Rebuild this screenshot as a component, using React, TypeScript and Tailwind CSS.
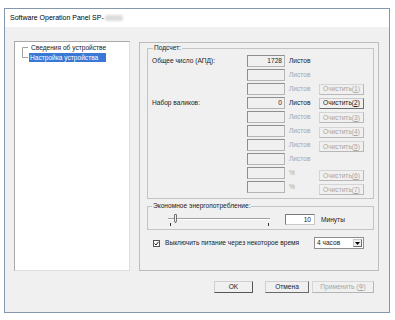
import React from "react";

const font = { fontFamily: '"Liberation Sans", Arial, sans-serif' };

type Row = { label?: string; value?: string; unit: string; active?: boolean };

const rows: Row[] = [
  { label: "Общее число (АПД):", value: "1728", unit: "Листов", active: true },
  { unit: "Листов" },
  { unit: "Листов" },
  { label: "Набор валиков:", value: "0", unit: "Листов", active: true },
  { unit: "Листов" },
  { unit: "Листов" },
  { unit: "Листов" },
  { unit: "Листов" },
  { unit: "%" },
  { unit: "%" },
];

const clearButtons: (number | null)[] = [1, 2, 3, 4, 5, null, 6, 7];

function Field({ value }: { value?: string }) {
  return (
    <div className="w-[38px] h-[12px] border border-[#b5b5b5] border-t-[#8e8e8e] border-l-[#8e8e8e] bg-[#f0f0f0] flex items-center justify-end pr-[2px] text-[#222]">
      {value}
    </div>
  );
}

function ClearButton({ n }: { n: number }) {
  const enabled = n === 2;
  return (
    <div
      className={
        enabled
          ? "w-[45px] h-[11px] border border-[#c8c8c8] border-b-[#6e6e6e] border-r-[#6e6e6e] bg-[#f0f0f0] flex items-center justify-center text-[#222]"
          : "w-[45px] h-[11px] border border-[#d4d4d4] border-b-[#b8b8b8] border-r-[#b8b8b8] bg-[#f0f0f0] flex items-center justify-center text-[#a6a6a6]"
      }
    >
      Очистить(<span className="underline">{n}</span>)
    </div>
  );
}

function Slider() {
  return (
    <svg width="108" height="14" viewBox="0 0 108 14">
      <line x1="0" y1="5.5" x2="102" y2="5.5" stroke="#a0a0a0" strokeWidth="1" />
      <line x1="0" y1="6.5" x2="102" y2="6.5" stroke="#ffffff" strokeWidth="1" />
      <path d="M6.5 1.5 H8.5 V8 L7.5 10 L6.5 8 Z" fill="#f0f0f0" stroke="#555" strokeWidth="0.8" />
      <line x1="2.5" y1="10" x2="2.5" y2="13" stroke="#333" strokeWidth="1" />
      <line x1="100.5" y1="10" x2="100.5" y2="13" stroke="#333" strokeWidth="1" />
    </svg>
  );
}

function TreeLines() {
  return (
    <svg width="8" height="16" viewBox="0 0 8 16" className="shrink-0">
      <path d="M1.5 4.5 H7 M1.5 4.5 V14.5 H7" fill="none" stroke="#a0a0a0" strokeWidth="1" />
    </svg>
  );
}

export default function App() {
  return (
    <div className="w-[395px] h-[320px] bg-white pt-[8px] pl-[4px] text-[6.6px] leading-[8px] text-[#222] overflow-hidden" style={font}>
      <div className="w-[386px] h-[305px] border border-[#8597ab] flex flex-col">
        <div className="h-[18px] bg-white flex items-center pl-[5px] text-[7px] text-black">
          Software Operation Panel SP-
          <span className="ml-[1px] w-[18px] h-[6px] bg-[#dcdcdc] rounded-[2px] blur-[1px]" />
        </div>

        <div className="flex-1 bg-[#f0f0f0] pl-[9px] pt-[14px] flex flex-col">
          <div className="flex gap-[9px]">
            {/* device tree */}
            <div className="w-[116px] h-[230px] bg-white border border-[#a9a9a9] border-r-[#dedede] border-b-[#dedede] flex pl-[6px] pt-[1px]">
              <TreeLines />
              <div className="flex flex-col">
                <div className="h-[9px] flex items-center pl-[2px]">Сведения об устройстве</div>
                <div className="h-[9px] flex items-center px-[1px] mt-[1px] bg-[#3a78d6] text-white">Настройка устройства</div>
              </div>
            </div>

            {/* settings panel */}
            <div className="w-[240px] h-[229px] mt-[1px] border border-[#bdbdbd] flex flex-col">
              <fieldset className="ml-[7px] mt-[1px] w-[227px] border border-[#c4c4c4] pl-[4px] pb-[3px]">
                <legend className="ml-[1px] px-[1px]">Подсчет:</legend>
                <div className="flex pt-[3px]">
                  <div className="flex flex-col gap-[2px]">
                    {rows.map((r, i) => (
                      <div key={i} className="flex items-center h-[12px]">
                        <div className="w-[95px]">{r.label}</div>
                        <Field value={r.value} />
                        <div className={r.active ? "ml-[4px] w-[30px]" : "ml-[4px] w-[30px] text-[#a6a6a6]"}>{r.unit}</div>
                      </div>
                    ))}
                  </div>
                  <div className="flex flex-col gap-[3.43px] pt-[28.5px]">
                    {clearButtons.map((n, i) =>
                      n === null ? <div key={i} className="h-[11px]" /> : <ClearButton key={i} n={n} />
                    )}
                  </div>
                </div>
              </fieldset>

              <fieldset className="ml-[7px] mt-[3px] w-[227px] border border-[#c4c4c4] pl-[20px]">
                <legend className="ml-[-16px] px-[1px]">Экономное энергопотребление:</legend>
                <div className="h-[19px] flex items-center">
                  <Slider />
                  <div className="ml-[9px] w-[30px] h-[11px] bg-white border border-[#c8c8c8] border-t-[#7a7a7a] border-l-[#7a7a7a] flex items-center justify-end pr-[3px]">
                    10
                  </div>
                  <div className="ml-[6px]">Минуты</div>
                </div>
              </fieldset>

              <div className="mt-[7px] h-[12px] flex items-center pl-[13px] pr-[14px]">
                <div className="w-[7px] h-[7px] bg-white border border-[#555] flex items-center justify-center">
                  <svg width="5" height="5" viewBox="0 0 5 5">
                    <path d="M0.5 2.5 L2 4 L4.5 0.8" fill="none" stroke="#222" strokeWidth="1" />
                  </svg>
                </div>
                <div className="ml-[5px]">Выключить питание через некоторое время</div>
                <div className="ml-auto w-[50px] h-[12px] bg-white border border-[#8e8e8e] flex items-center justify-between pl-[2px] pr-[1px]">
                  <span>4 часов</span>
                  <div className="w-[9px] h-[8px] bg-[#f0f0f0] border border-[#c8c8c8] border-b-[#707070] border-r-[#707070] flex items-center justify-center">
                    <svg width="5" height="3" viewBox="0 0 5 3">
                      <path d="M0 0 H5 L2.5 3 Z" fill="#000" />
                    </svg>
                  </div>
                </div>
              </div>
            </div>
          </div>

          <div className="mt-[10px] flex justify-end pr-[15px]">
            <div className="w-[39px] h-[12px] border border-[#cfcfcf] border-b-[#555] border-r-[#555] bg-[#f0f0f0] flex items-center justify-center">
              OK
            </div>
            <div className="ml-[12px] w-[44px] h-[12px] border border-[#cfcfcf] border-b-[#6a6a6a] border-r-[#6a6a6a] bg-[#f0f0f0] flex items-center justify-center">
              Отмена
            </div>
            <div className="ml-[3px] w-[62px] h-[12px] border border-[#d6d6d6] border-b-[#b5b5b5] border-r-[#b5b5b5] bg-[#f0f0f0] flex items-center justify-center text-[#a6a6a6]">
              Применить (<span className="underline">Ф</span>)
            </div>
          </div>
        </div>
      </div>
    </div>
  );
}
